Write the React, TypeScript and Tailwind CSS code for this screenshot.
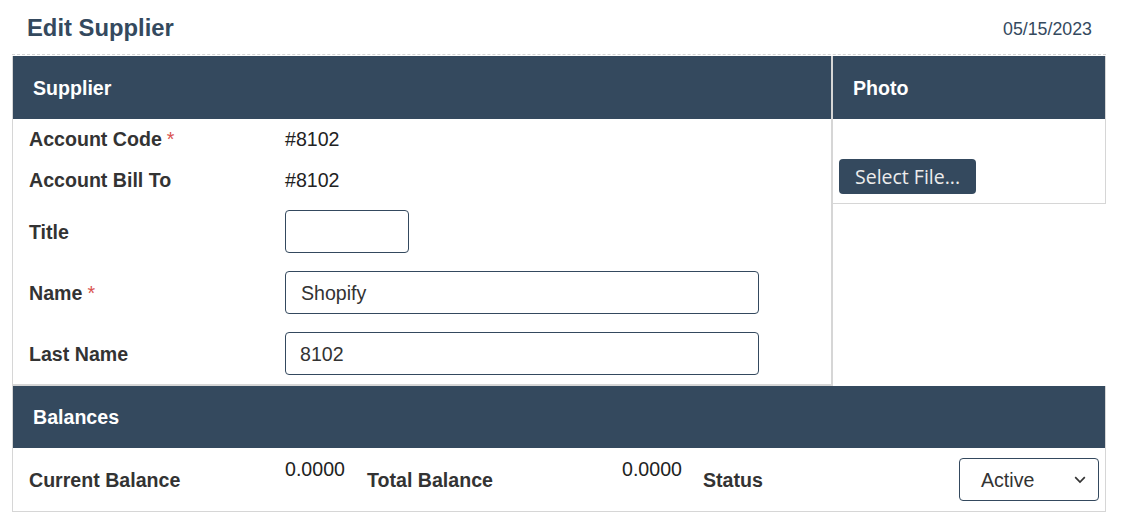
import React from "react";

const font = { fontFamily: '"Liberation Sans", Arial, sans-serif' };

function Label({ children, req }: { children: React.ReactNode; req?: boolean }) {
  return (
    <div className="w-[256px] shrink-0 font-bold text-[#333333]">
      {children}
      {req && <span className="ml-[5px] font-normal text-[#d9534f]">*</span>}
    </div>
  );
}

export default function App() {
  return (
    <div className="bg-white w-[1123px] h-[514px] text-[19.6px] leading-[22px]" style={font}>
      <div className="flex items-center justify-between h-[54px] pl-[27px] pr-[31px]">
        <h1 className="text-[23.8px] font-bold text-[#34495e] pt-[1px]">Edit Supplier</h1>
        <div className="text-[17.8px] text-[#34495e] pt-[3px]">05/15/2023</div>
      </div>
      <div className="ml-[12px] w-[1094px] border-t border-[#d6d6d6] pt-[1px]" style={{ borderTopStyle: "dashed" }}>
        <div className="flex items-start">
          <div className="w-[821px] border-l border-r-2 border-b-2 border-[#d6d6d6]">
            <div className="h-[63px] bg-[#34495e] text-white font-bold flex items-center pl-[20px]">Supplier</div>
            <div className="pl-[16px]">
              <div className="flex items-center h-[40px]">
                <Label req>Account Code</Label>
                <div className="text-[#222]">#8102</div>
              </div>
              <div className="flex items-center h-[42px]">
                <Label>Account Bill To</Label>
                <div className="text-[#222]">#8102</div>
              </div>
              <div className="flex items-center h-[61px]">
                <Label>Title</Label>
                <div className="w-[124px] h-[43px] border border-[#34495e] rounded-[4px]" />
              </div>
              <div className="flex items-center h-[61px]">
                <Label req>Name</Label>
                <div className="w-[474px] h-[43px] border border-[#34495e] rounded-[4px] flex items-center pl-[15px] text-[#333]">Shopify</div>
              </div>
              <div className="flex items-center h-[61px]">
                <Label>Last Name</Label>
                <div className="w-[474px] h-[43px] border border-[#34495e] rounded-[4px] flex items-center pl-[14px] text-[#333]">8102</div>
              </div>
            </div>
          </div>
          <div className="flex-1 border-r border-b border-[#d6d6d6]">
            <div className="h-[63px] bg-[#34495e] text-white font-bold flex items-center pl-[20px]">Photo</div>
            <div className="h-[84px] pl-[6px] pt-[40px]">
              <button
                className="h-[35px] px-[16px] bg-[#34495e] text-[#ececec] rounded-[4px] text-[19.5px] leading-[22px]"
                style={{ fontFamily: '"Open Sans", "Noto Sans", sans-serif' }}
              >
                Select File...
              </button>
            </div>
          </div>
        </div>
        <div className="border-l border-r border-b border-[#d6d6d6]">
          <div className="h-[62px] bg-[#34495e] text-white font-bold flex items-center pl-[20px]">Balances</div>
          <div className="flex items-center h-[63px] pl-[16px] pr-[6px]">
            <div className="w-[256px] shrink-0 font-bold text-[#333] pt-[1px]">Current Balance</div>
            <div className="w-[82px] shrink-0 self-start pt-[10px] text-[#222]">0.0000</div>
            <div className="w-[255px] shrink-0 font-bold text-[#333] pt-[1px]">Total Balance</div>
            <div className="w-[81px] shrink-0 self-start pt-[10px] text-[#222]">0.0000</div>
            <div className="flex-1 font-bold text-[#333] pt-[1px]">Status</div>
            <div className="w-[140px] h-[43px] border border-[#34495e] rounded-[4px] flex items-center justify-between pl-[21px] pr-[12px] text-[#333]">
              <span>Active</span>
              <svg width="12" height="8" viewBox="0 0 12 8" fill="none">
                <path d="M1.2 1.2 L6 6 L10.8 1.2" stroke="#333" strokeWidth="1.7" />
              </svg>
            </div>
          </div>
        </div>
      </div>
    </div>
  );
}
